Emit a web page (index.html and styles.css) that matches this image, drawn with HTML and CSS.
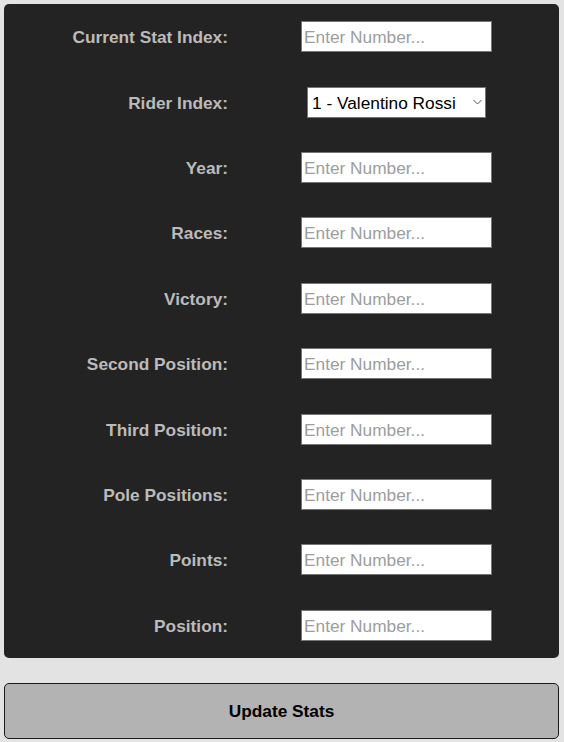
FILE: index.html
```html
<!DOCTYPE html>
<html>
<head>
<meta charset="utf-8">
<link rel="stylesheet" href="styles.css">
</head>
<body>
<form class="panel">
  <div class="row"><label class="lbl">Current Stat Index:</label><div class="cell"><input class="num" type="text" placeholder="Enter Number..."></div></div>
  <div class="row"><label class="lbl">Rider Index:</label><div class="cell"><div class="selwrap"><select class="sel"><option>1 - Valentino Rossi</option></select><svg class="chev" width="9" height="6" viewBox="0 0 9 6"><path d="M0.5 1 L4.5 5 L8.5 1" fill="none" stroke="#555" stroke-width="1"/></svg></div></div></div>
  <div class="row"><label class="lbl">Year:</label><div class="cell"><input class="num" type="text" placeholder="Enter Number..."></div></div>
  <div class="row"><label class="lbl">Races:</label><div class="cell"><input class="num" type="text" placeholder="Enter Number..."></div></div>
  <div class="row"><label class="lbl">Victory:</label><div class="cell"><input class="num" type="text" placeholder="Enter Number..."></div></div>
  <div class="row"><label class="lbl">Second Position:</label><div class="cell"><input class="num" type="text" placeholder="Enter Number..."></div></div>
  <div class="row"><label class="lbl">Third Position:</label><div class="cell"><input class="num" type="text" placeholder="Enter Number..."></div></div>
  <div class="row"><label class="lbl">Pole Positions:</label><div class="cell"><input class="num" type="text" placeholder="Enter Number..."></div></div>
  <div class="row"><label class="lbl">Points:</label><div class="cell"><input class="num" type="text" placeholder="Enter Number..."></div></div>
  <div class="row"><label class="lbl">Position:</label><div class="cell"><input class="num" type="text" placeholder="Enter Number..."></div></div>
</form>
<button class="btn" type="button">Update Stats</button>
</body>
</html>
```

FILE: styles.css
```css
html, body {
  background: #e3e3e3;
}
body {
  margin: 4px 5px 4px 4px;
  font-family: "Liberation Sans", Arial, sans-serif;
  font-size: 17px;
}
.panel {
  background: #232323;
  border-radius: 5px;
  display: grid;
  grid-auto-rows: 65.4px;
  margin: 0;
}
.row {
  display: grid;
  grid-template-columns: 224px 297px;
  column-gap: 20px;
  align-items: center;
}
.lbl {
  text-align: right;
  font-weight: bold;
  color: #bbbbbb;
  font-size: 17.3px;
  padding-top: 2px;
}
.cell {
  display: flex;
  justify-content: center;
}
.num {
  box-sizing: border-box;
  width: 191px;
  height: 31px;
  margin: 0;
  padding: 2px 2px 0;
  border: 1px solid #767676;
  border-radius: 0;
  background: #ffffff;
  font-family: "Liberation Sans", Arial, sans-serif;
  font-size: 17.3px;
  color: #000;
  outline: none;
}
.num::placeholder {
  color: #9d9d9d;
}
.selwrap {
  position: relative;
  width: 179px;
  height: 31px;
}
.sel {
  -webkit-appearance: none;
  appearance: none;
  box-sizing: border-box;
  width: 179px;
  height: 31px;
  margin: 0;
  padding: 2px 0 0 4px;
  border: 1px solid #767676;
  border-radius: 0;
  background: #ffffff;
  font-family: "Liberation Sans", Arial, sans-serif;
  font-size: 17.3px;
  color: #000;
}
.chev {
  position: absolute;
  right: 4px;
  top: 12px;
  pointer-events: none;
}
.btn {
  display: block;
  box-sizing: border-box;
  width: 100%;
  height: 56px;
  margin-top: 25px;
  padding-top: 2px;
  background: #b3b3b3;
  border: 1px solid #1a1a1a;
  border-radius: 5px;
  font-family: "Liberation Sans", Arial, sans-serif;
  font-size: 17.3px;
  font-weight: bold;
  color: #000;
}
```
